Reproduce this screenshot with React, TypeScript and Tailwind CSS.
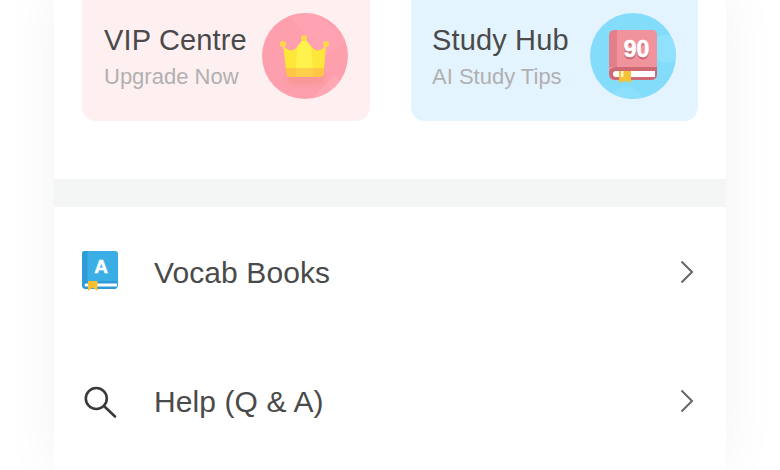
const font = "font-['Liberation_Sans',Arial,sans-serif]";

function CrownBadge() {
  return (
    <svg width="86" height="86" viewBox="0 0 86 86" className="shrink-0">
      <defs>
        <clipPath id="crownClip">
          <circle cx="43" cy="43" r="43" />
        </clipPath>
        <filter id="crownBlur" x="-30%" y="-30%" width="160%" height="160%">
          <feGaussianBlur stdDeviation="3" />
        </filter>
      </defs>
      <circle cx="43" cy="43" r="43" fill="#fe9fae" />
      <g clipPath="url(#crownClip)">
        <path d="M26 0 L56 0 L86 30 L60 44 Z" fill="#ffa6b4" opacity="0.5" />
        <path d="M50 86 L72 62 L82 72 L70 90 Z" fill="#ffabb8" opacity="0.7" />
      </g>
      <path d="M24 60 H64 L62 72 H26 Z" fill="#f5907f" opacity="0.5" filter="url(#crownBlur)" />
      <path d="M21 32 C26 39 32 39 36 33 L42 25 L49 33 C53 39 59 39 64 32 L62 56 H24 Z" fill="#ffe73a" />
      <path d="M35 34 L42 25 L49 33 L51 56 H34 Z" fill="#fff24d" />
      <path d="M23.5 55 H62.5 L61.5 62 Q61 64 58 64 H27 Q25 64 24.5 62 Z" fill="#ffc544" />
      <path d="M34 55 H51 V64 H34 Z" fill="#ffcf4c" />
      <circle cx="21" cy="31" r="3" fill="#ffd84a" />
      <circle cx="42" cy="25" r="3" fill="#ffd84a" />
      <circle cx="64" cy="31" r="3" fill="#ffd84a" />
    </svg>
  );
}

function BookBadge() {
  return (
    <svg width="86" height="86" viewBox="0 0 86 86" className="shrink-0">
      <defs>
        <clipPath id="bookClip">
          <circle cx="43" cy="43" r="43" />
        </clipPath>
      </defs>
      <circle cx="43" cy="43" r="43" fill="#84dcfb" />
      <g clipPath="url(#bookClip)">
        <circle cx="76" cy="36" r="14" fill="#8fe1fc" />
        <circle cx="36" cy="92" r="18" fill="#8ce0fb" />
      </g>
      <path d="M19 23 Q19 17 25 17 H62 Q67 17 67 22 V61 Q67 67 60 67 H25 Q19 67 19 61 Z" fill="#f0939c" />
      <path d="M19 23 Q19 18 24 17 H27 V54 H19 Z" fill="#e27f8a" />
      <path d="M19 60 Q19 54 27 54 H67 V61 Q67 67 60 67 H25 Q19 67 19 60 Z" fill="#cf6a74" />
      <path d="M26 58 H65 V64 H26 Q23 64 23 61 Q23 58 26 58 Z" fill="#ffffff" />
      <path d="M29 58 H41 V70 L35 68 L29 70 Z" fill="#f5c136" />
      <rect x="31" y="58" width="2.5" height="6" fill="#fff3c4" />
      <text x="46.5" y="45.5" textAnchor="middle" fontSize="23" fontWeight="700" fontFamily="Liberation Sans, sans-serif" fill="#c9646f" stroke="#c9646f" strokeWidth="0.6">90</text>
      <text x="46.5" y="44" textAnchor="middle" fontSize="23" fontWeight="700" fontFamily="Liberation Sans, sans-serif" fill="#ffffff" stroke="#ffffff" strokeWidth="0.6">90</text>
    </svg>
  );
}

function VocabIcon() {
  return (
    <svg width="36" height="40" viewBox="0 0 36 40" className="mb-[2px] shrink-0">
      <path d="M0 3 Q0 0 3 0 H33 Q36 0 36 3 V33 Q36 38 32 38 H4 Q0 38 0 33 Z" fill="#3baee6" />
      <path d="M0 3 Q0 0 3 0 H5.5 V31 H0 Z" fill="#2f9bd6" />
      <path d="M0 34 Q0 30 4 30 H36 V33 Q36 38 32 38 H4 Q0 38 0 34 Z" fill="#2f9bd6" />
      <path d="M4 32.5 H35 V35.5 H4 Q2.5 35.5 2.5 34 Q2.5 32.5 4 32.5 Z" fill="#ffffff" />
      <path d="M6 30 H15.5 V40 L10.7 36.5 L6 40 Z" fill="#fdc02f" />
      <text x="19" y="22" textAnchor="middle" fontSize="19" fontWeight="700" fontFamily="Liberation Sans, sans-serif" fill="#ffffff" stroke="#ffffff" strokeWidth="0.5">A</text>
    </svg>
  );
}

function SearchIcon() {
  return (
    <svg width="36" height="36" viewBox="0 0 36 36" fill="none" stroke="#3a3a3a" strokeWidth="2.6" strokeLinecap="round" className="shrink-0">
      <circle cx="14.3" cy="15.5" r="10.5" />
      <path d="M23 24 L33 33.5" />
    </svg>
  );
}

function Chevron() {
  return (
    <svg width="14" height="24" viewBox="0 0 14 24" fill="none" stroke="#666666" strokeWidth="2" className="shrink-0">
      <path d="M1.5 1.5 L12 12 L1.5 22.5" />
    </svg>
  );
}

function PromoCard({ title, subtitle, className, badge }: { title: string; subtitle: string; className: string; badge: React.ReactNode }) {
  return (
    <div className={`flex h-[137px] items-center justify-between rounded-[14px] pr-[22px] pt-[6px] ${className}`}>
      <div className="pt-[2px]">
        <p className="-mt-[1px] text-[29px] leading-[38px] tracking-[0.15px] text-[#4a4a4a]">{title}</p>
        <p className="mt-[4px] text-[22px] leading-[28px] text-[#b0b0b0]">{subtitle}</p>
      </div>
      {badge}
    </div>
  );
}

function MenuRow({ icon, label }: { icon: React.ReactNode; label: string }) {
  return (
    <div className="flex h-[129px] items-center pl-[28px] pr-[32px]">
      <div className="flex w-[72px] items-center">{icon}</div>
      <span className="flex-1 pt-[2px] text-[30px] tracking-[0.1px] text-[#4a4a4a]">{label}</span>
      <Chevron />
    </div>
  );
}

export default function App() {
  return (
    <div className={`h-[470px] w-[780px] overflow-hidden bg-white ${font}`}>
      <div className="mx-auto -mt-4 h-[486px] w-[672px] bg-white shadow-[0_0_54px_rgba(0,0,0,0.05)]">
        <div className="grid grid-cols-[288px_287px] justify-between pl-[28px] pr-[28px]">
          <PromoCard title="VIP Centre" subtitle="Upgrade Now" className="bg-[#fef0f0] pl-[22px]" badge={<CrownBadge />} />
          <PromoCard title="Study Hub" subtitle="AI Study Tips" className="bg-[#e4f4fe] pl-[21px]" badge={<BookBadge />} />
        </div>
        <div className="mt-[58px] h-[28px] bg-[#f4f6f6]" />
        <MenuRow icon={<VocabIcon />} label="Vocab Books" />
        <MenuRow icon={<SearchIcon />} label="Help (Q & A)" />
      </div>
    </div>
  );
}
